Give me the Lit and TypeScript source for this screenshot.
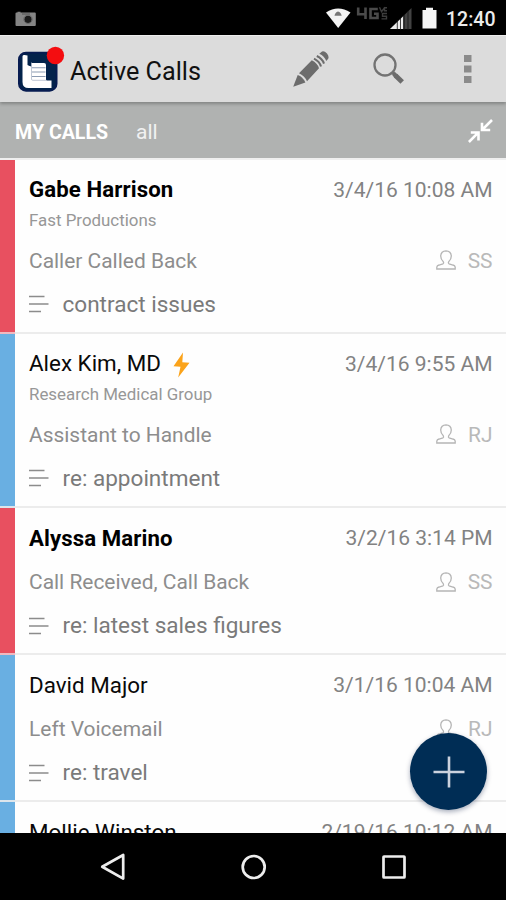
import { LitElement, html, css, svg, nothing } from "lit";
import { customElement, property } from "lit/decorators.js";

interface Call {
  name: string;
  unread?: boolean;
  urgent?: boolean;
  company?: string;
  date: string;
  status: string;
  owner: string;
  note: string;
}

const CALLS: Call[] = [
  { name: "Gabe Harrison", unread: true, company: "Fast Productions", date: "3/4/16 10:08 AM", status: "Caller Called Back", owner: "SS", note: "contract issues" },
  { name: "Alex Kim, MD", urgent: true, company: "Research Medical Group", date: "3/4/16 9:55 AM", status: "Assistant to Handle", owner: "RJ", note: "re: appointment" },
  { name: "Alyssa Marino", unread: true, date: "3/2/16 3:14 PM", status: "Call Received, Call Back", owner: "SS", note: "re: latest sales figures" },
  { name: "David Major", date: "3/1/16 10:04 AM", status: "Left Voicemail", owner: "RJ", note: "re: travel" },
];

const NEXT_CALL = { name: "Mollie Winston", date: "2/19/16 10:12 AM" };

@customElement("status-bar")
class StatusBar extends LitElement {
  static styles = css`
    :host { display: flex; align-items: center; height: 36px; background: #000; padding: 0 11px 0 15px; border-bottom: 1px solid #f0f0f0; box-sizing: border-box; }
    svg { display: block; flex: none; }
    .camera { margin-top: 2px; margin-right: auto; }
    .radios { margin-top: 1px; }
    .time { color: #ececec; font-size: 19.5px; font-weight: 500; line-height: 24px; width: 49px; margin-left: 6px; margin-top: 4px; white-space: nowrap; }
  `;
  render() {
    return html`
      <svg class="camera" width="22" height="16" viewBox="0 0 22 16">
        <path d="M1.500 1.500h1V.8h3v.7h14.300q1 0 1 1v11.500q0 1-1 1H1.500q-1 0-1-1V2.500q0-1 1-1z" fill="#858585" />
        <path d="M7 3h8" stroke="#555" />
        <circle cx="13" cy="8.300" r="3.600" fill="#1b1b1b" />
        <circle cx="13" cy="8.300" r="4.200" fill="none" stroke="#606060" stroke-width=".8" />
      </svg>
      <svg class="radios" width="115" height="30" viewBox="0 0 115 30">
        <path d="M1 9.500Q13 1.500 25.500 9.500L13.200 25z" fill="#f3f3f3" />
        <path d="M9.500 12.800q.6-3.500 3.500-4.300 3 .8 3.700 4.300z" fill="#777" />
        <path d="M33.200 4.500v6.700h7.300M40.500 4.500v11.500M52.800 6h-7.300v9h7v-4.300h-3.500" fill="none" stroke="#4a4a4a" stroke-width="2.600" />
        <path d="M54.500 4.200l2 4.500 3.500-4.500M62 4.700h-2.500v3H62M62 10.500h-4.500v2.700h4v2.700h-5" fill="none" stroke="#3d3d3d" stroke-width="1.400" />
        <path d="M86.500 5V26H65z" fill="#424242" />
        <path d="M78 13.500V26H65z" fill="#ececec" />
        <path d="M72.300 17v10M75.500 15v12M79.200 12v15M83 8v19" stroke="#111" stroke-width=".8" />
        <path d="M97.500 7h3.500V4.800h7V7h3.500v18.500h-14z" fill="#f5f5f5" />
      </svg>
      <div class="time">12:40</div>
    `;
  }
}

@customElement("app-header")
class AppHeader extends LitElement {
  static styles = css`
    :host { display: flex; align-items: center; height: 66px; background: #dcdcdc; padding: 0 34px 0 18px; position: relative; z-index: 1; box-shadow: 0 2px 3px rgba(0, 0, 0, .25); }
    svg { display: block; flex: none; }
    .logo { margin-top: -4px; }
    .title { margin-left: 5px; margin-right: auto; font-size: 25.200px; line-height: 32px; color: #111; white-space: nowrap; margin-top: 5px; }
    .pencil { margin-right: 44px; }
    .search { margin-right: 59px; }
  `;
  render() {
    return html`
      <svg class="logo" width="47" height="50" viewBox="0 0 47 50">
        <rect x="1" y="10.700" width="37.500" height="38" rx="7" fill="#03234b" stroke="#071c51" stroke-width="2" />
        <path d="M4.500 14.500Q4.500 12.500 6.500 13l3 .6V23q2 1 4 1.500V21h12.500q2 0 2 2v14.500q0 1 1 1h4.500V46H10.500q-6 0-6-6z" fill="#fff" />
        <path d="M14 25.700h13.500M14 30h13.500M14 34.500h13.500" stroke="#8b9bb2" stroke-width="1.100" />
        <path d="M13.500 20.500v16.500q0 1.300 1.300 1.300h13.500" fill="none" stroke="#aeb9c9" stroke-width=".8" />
        <circle cx="37.400" cy="13.500" r="8.700" fill="#f40d10" />
      </svg>
      <div class="title">Active Calls</div>
      <svg class="pencil" width="37" height="38" viewBox="0 0 37 38">
        <g fill="#6c6c6c">
          <path d="M1.200 36.700L5.700 25q5 1.500 7.700 7.500z" />
          <path d="M7 23.300L19.800 10.200Q25.500 13 27 18.200L15 31.300Q12.500 25.700 7 23.300z" />
          <path d="M27.300 3.700L30 1.400q2.200-1 5 2.200 2.500 3.200 1 5.500l-1.800 2Q32.500 6 27.300 3.700z" />
        </g>
        <path d="M22 8.700Q27.500 11.500 29 16.500M24.800 6Q30.300 8.500 32 13.600" fill="none" stroke="#6c6c6c" stroke-width="2" />
      </svg>
      <svg class="search" width="32" height="32" viewBox="0 0 32 32">
        <circle cx="12" cy="12" r="10.500" fill="none" stroke="#737373" stroke-width="2.300" />
        <path d="M19 19l3.500 3.500" stroke="#737373" stroke-width="2.200" />
        <path d="M22.500 22.500l6.700 6.500" stroke="#6c6c6c" stroke-width="5" />
        <path d="M21.500 21.500l1.500 1.500" stroke="#6c6c6c" stroke-width="4.500" stroke-linecap="round" />
      </svg>
      <svg width="8" height="30" viewBox="0 0 8 30" fill="#8b8b8b">
        <rect y="1" width="7.500" height="7" /><rect y="11.500" width="7.500" height="7" /><rect y="22" width="7.500" height="7" />
      </svg>
    `;
  }
}

@customElement("filter-tabs")
class FilterTabs extends LitElement {
  static styles = css`
    :host { display: flex; align-items: center; height: 56px; background: #b0b2b1; padding: 3px 13px 0 15px; box-sizing: border-box; color: #fff; font-size: 19.600px; line-height: 26px; }
    .tab { white-space: nowrap; }
    .active { font-weight: 700; width: 93px; margin-top: 2px; }
    .all { margin-left: 28px; margin-right: auto; font-size: 21px; color: #f1f1f1; }
    svg { display: block; margin-top: -1px; }
  `;
  render() {
    return html`
      <div class="tab active">MY CALLS</div>
      <div class="tab all">all</div>
      <svg width="25" height="24" viewBox="0 0 25 24" fill="none" stroke="#fff" stroke-width="2.600">
        <path d="M24 1l-9.500 9.500M14 3.800v7.200h8.200M.9 23l9.300-9.300M2.800 13.500h7.700v8" />
      </svg>
    `;
  }
}

@customElement("call-row")
class CallRow extends LitElement {
  @property({ attribute: false }) call!: Partial<Call>;

  static styles = css`
    :host { display: block; }
    .wrap { display: flex; }
    .stripe { width: 14.500px; flex: none; background: #69afe2; border-bottom: 2px solid #dce5ec; box-sizing: border-box; }
    .unread .stripe { background: #e85060; border-bottom-color: #f0b9c0; }
    .row { flex: 1; box-sizing: border-box; padding: 16px 13.500px 0 14.500px; border-bottom: 2px solid #ececec; background: #fefefe; height: 147px; display: flex; flex-direction: column; }
    .row.tall { height: 174.200px; }
    .line { display: flex; align-items: center; height: 28px; line-height: 28px; white-space: nowrap; }
    .name { font-size: 22.400px; color: #0a0a0a; }
    .tall .name { margin-top: -2px; }
    .unread .name { font-weight: 700; font-size: 22.200px; letter-spacing: .1px; color: #000; }
    .date { margin-left: auto; font-size: 21px; color: #828282; margin-top: -1px; }
    .company { font-size: 16.900px; line-height: 22px; height: 22px; margin-top: 5px; margin-bottom: 1px; color: #979797; white-space: nowrap; }
    .status { margin-top: 16px; font-size: 20.950px; color: #8d8d8d; }
    .tall .status { margin-top: 14.500px; }
    .owner { margin-left: 12px; color: #b9b9b9; }
    .person { margin-left: auto; margin-top: -1px; }
    .note { margin-top: 16px; font-size: 22.550px; color: #7a7a7a; }
    .note svg { margin-right: 13.500px; margin-top: -1px; }
    svg { display: block; flex: none; }
    .bolt { margin-left: 12px; margin-top: 1px; }
  `;
  render() {
    const c = this.call;
    return html`
      <div class="wrap ${c.unread ? "unread" : ""}">
        <div class="stripe"></div>
        <div class="row ${c.company ? "tall" : ""}">
          <div class="line">
            <span class="name">${c.name}</span>
            ${c.urgent
              ? html`<svg class="bolt" width="17" height="26" viewBox="0 0 17 26"><path d="M10 .5L.5 14.200l7 .6L5.200 25.500 16.500 10.800l-7.200-.6z" fill="#fba31a" /></svg>`
              : nothing}
            <span class="date">${c.date}</span>
          </div>
          ${c.company ? html`<div class="company">${c.company}</div>` : nothing}
          ${c.status
            ? html`<div class="line status">
                <span>${c.status}</span>
                <svg class="person" width="20" height="20" viewBox="0 0 20 20" fill="none" stroke="#b5b5b5" stroke-width="1.300">
                  <path d="M.8 19v-1.800Q1 15.500 3 15l4-1.200q1-.6.300-2Q4.700 9.500 4.700 6 5 1 10 .8q5 .2 5.300 5.200 0 3.500-2.600 5.800-.7 1.400.3 2l4 1.200q2 .5 2.200 2.200V19z" />
                </svg>
                <span class="owner">${c.owner}</span>
              </div>`
            : nothing}
          ${c.note
            ? html`<div class="line note">
                <svg width="20" height="18" viewBox="0 0 20 18" stroke="#8c8c8c" stroke-width="1.500">
                  ${svg`<path d="M0 1.500h15.500M0 9h19.500M0 16.500h12" />`}
                </svg>
                <span>${c.note}</span>
              </div>`
            : nothing}
        </div>
      </div>
    `;
  }
}

@customElement("nav-bar")
class NavBar extends LitElement {
  static styles = css`
    :host { display: flex; align-items: center; height: 67px; background: #000; padding: 0 99px 0 100px; box-sizing: border-box; justify-content: space-between; }
    svg { display: block; fill: none; stroke: #ededed; stroke-width: 2.700px; stroke-linejoin: round; }
  `;
  render() {
    return html`
      <svg width="26" height="28" viewBox="0 0 26 28"><path d="M2.200 13.800L23.200 2v23.600z" /></svg>
      <svg width="28" height="28" viewBox="0 0 28 28"><circle cx="13.700" cy="14" r="11" /></svg>
      <svg width="26" height="28" viewBox="0 0 26 28"><rect x="2.500" y="3.500" width="21" height="21" rx=".5" /></svg>
    `;
  }
}

@customElement("app-root")
class AppRoot extends LitElement {
  static styles = css`
    :host { display: flex; flex-direction: column; height: 900px; width: 506px; overflow: hidden; background: #fefefe; font-family: Roboto, "Liberation Sans", sans-serif; position: relative; }
    .list { flex: 1; overflow: hidden; min-height: 0; border-top: 2px solid #efefef; }
    .fab { position: absolute; left: 410px; top: 733px; width: 77px; height: 77px; border-radius: 50%; background: #002d55; box-shadow: 0 2px 5px rgba(0, 20, 60, .35); display: flex; align-items: center; justify-content: center; }
    .fab svg { display: block; }
  `;
  render() {
    return html`
      <status-bar></status-bar>
      <app-header></app-header>
      <filter-tabs></filter-tabs>
      <div class="list">
        ${CALLS.map((c) => html`<call-row .call=${c}></call-row>`)}
        <call-row .call=${NEXT_CALL}></call-row>
      </div>
      <nav-bar></nav-bar>
      <div class="fab">
        <svg width="32" height="32" viewBox="0 0 32 32" stroke="#cbd2de" stroke-width="2.600"><path d="M16 .5v31M.5 16h31" /></svg>
      </div>
    `;
  }
}
